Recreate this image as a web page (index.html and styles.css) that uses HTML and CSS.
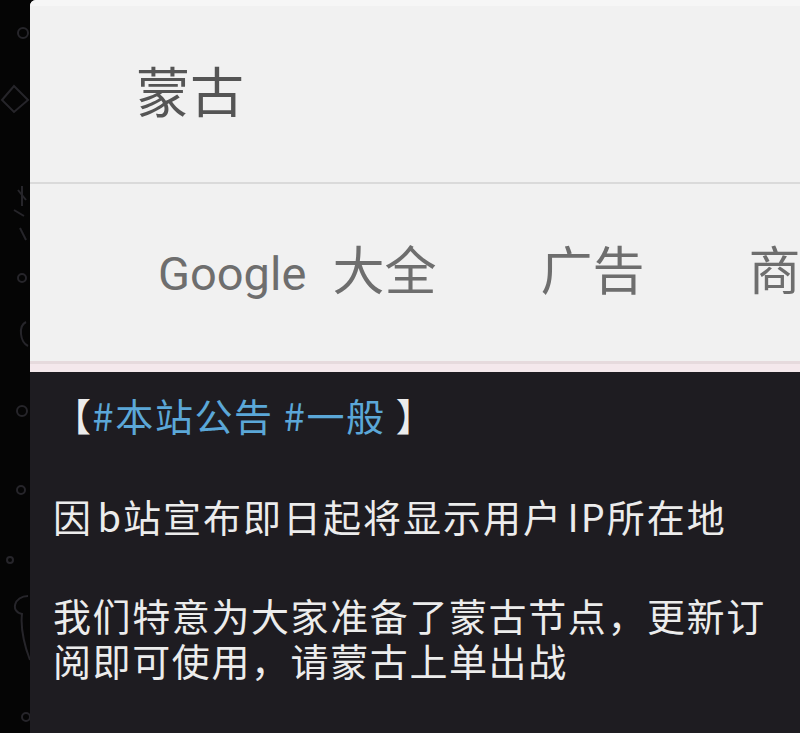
FILE: index.html
```html
<!DOCTYPE html>
<html lang="zh-CN">
<head>
  <meta charset="UTF-8">
  <meta name="viewport" content="width=device-width, initial-scale=1.0">
  <title>蒙古节点</title>
  <link rel="stylesheet" href="styles.css">
</head>
<body>
  <div class="chat">
    <div class="wallpaper">
      <svg width="30" height="733" viewBox="0 0 30 733" fill="none" stroke="#26252a" stroke-width="2">
        <circle cx="23" cy="33" r="5"/>
        <path d="M2 100 L14 86 L28 100 L14 112 Z"/>
        <path d="M18 190 L26 200 M22 186 L22 206 M14 210 L24 216"/>
        <path d="M20 228 L26 240"/>
        <circle cx="22" cy="278" r="4"/>
        <path d="M26 322 C18 326 20 342 28 346"/>
        <circle cx="22" cy="411" r="5"/>
        <circle cx="21" cy="490" r="4"/>
        <circle cx="10" cy="560" r="3"/>
        <path d="M28 596 C14 596 10 612 22 614 C20 630 26 650 30 660"/>
        <circle cx="26" cy="717" r="4"/>
      </svg>
    </div>

    <div class="message">
      <div class="photo">
        <div class="search-box">
          <span class="query">蒙古</span>
        </div>
        <div class="tabs">
          <span class="tab"><span class="latin">Google</span>大全</span>
          <span class="tab">广告</span>
          <span class="tab">商</span>
        </div>
        <div class="photo-edge"></div>
      </div>

      <div class="bubble">
        <p>【<span class="tag">#本站公告 #一般 </span>】</p>
        <p class="tight">因 b站宣布即日起将显示用户 IP所在地</p>
        <p>我们特意为大家准备了蒙古节点，更新订阅即可使用，请蒙古上单出战</p>
      </div>
    </div>
  </div>
</body>
</html>
```

FILE: styles.css
```css
body {
  margin: 0;
  background-color: #050505;
  font-family: "Noto Sans CJK SC", "Noto Sans", sans-serif;
  overflow: hidden;
}

.chat {
  display: grid;
  grid-template-columns: 30px 1fr;
  height: 733px;
}

.wallpaper svg {
  display: block;
}

.message {
  display: flex;
  flex-direction: column;
  background-color: #1e1c21;
  overflow: hidden;
  border-top-left-radius: 6px;
}

.photo {
  flex: none;
  background-color: #f1f1f1;
  display: flex;
  flex-direction: column;
  height: 372px;
}

.search-box {
  height: 184px;
  border-top: 6px solid #f6f6f6;
  border-bottom: 2px solid #dadada;
  box-sizing: border-box;
  display: flex;
  align-items: center;
  padding: 0 0 10px 106px;
}

.query {
  font-size: 54px;
  color: #555;
}

.tabs {
  flex: 1;
  display: flex;
  align-items: center;
  gap: 104px;
  padding: 0 0 10px 128px;
  white-space: nowrap;
}

.tab {
  font-size: 52px;
  color: #6e6e6e;
}

.latin {
  font-family: Roboto, sans-serif;
  font-size: 47px;
  margin-right: 26px;
}

.photo-edge {
  height: 8px;
  background-color: #f4e8ec;
  border-top: 3px solid #e6dadd;
}

.bubble {
  flex: 1;
  padding: 20px 20px 0 23px;
  color: #ececec;
  font-size: 38px;
  line-height: 45px;
  letter-spacing: 1.6px;
}

.bubble p {
  margin: 0 0 56px;
}

.bubble .tight {
  margin-bottom: 54px;
  word-spacing: -6px;
  letter-spacing: 2px;
}

.tag {
  color: #5ba7d8;
}
```
